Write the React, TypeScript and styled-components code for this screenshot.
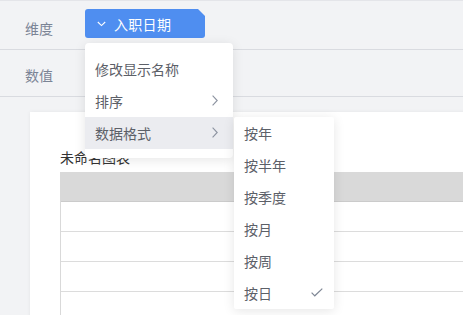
import React from 'react';
import styled, { createGlobalStyle } from 'styled-components';

const GlobalStyle = createGlobalStyle`
  html, body {
    margin: 0;
    padding: 0;
  }
  body {
    font-family: "Noto Sans CJK SC", "Noto Sans", sans-serif;
    background: #f2f3f5;
  }
`;

const Page = styled.div`
  position: relative;
  width: 463px;
  height: 315px;
  overflow: hidden;
  background: #f2f3f5;
  border-top: 1px solid #e4e5e9;
  box-sizing: border-box;
`;

const FieldRow = styled.div<{ $height: number; $pad: number }>`
  display: flex;
  align-items: flex-start;
  height: ${(p) => p.$height}px;
  padding-top: ${(p) => p.$pad}px;
  box-sizing: border-box;
  border-bottom: 1px solid #d9dbe0;
  padding-left: 25px;
`;

const FieldLabel = styled.div<{ $top: number }>`
  width: 60px;
  margin-top: ${(p) => p.$top}px;
  font-size: 14px;
  line-height: 20px;
  color: #7b8495;
`;

const Tag = styled.div`
  display: flex;
  align-items: center;
  gap: 8px;
  width: 120px;
  height: 29px;
  padding-left: 12px;
  box-sizing: border-box;
  background: #4f8ef0;
  border-radius: 3px;
  clip-path: polygon(0 0, calc(100% - 7px) 0, 100% 7px, 100% 100%, 0 100%);
  color: #fff;
  font-size: 14px;
  letter-spacing: 0.3px;
`;

const Content = styled.div`
  padding: 15px 0 0 30px;
`;

const Card = styled.div`
  width: 480px;
  height: 240px;
  background: #fff;
  box-shadow: 0 0 4px rgba(0, 0, 0, 0.06);
  padding: 35px 0 0 30px;
  box-sizing: border-box;
`;

const ChartTitle = styled.div`
  font-size: 14px;
  line-height: 20px;
  color: #333;
  margin-bottom: 5px;
`;

const Table = styled.div`
  width: 420px;
  border-left: 1px solid #d9d9d9;
`;

const HeaderRow = styled.div`
  height: 30px;
  background: #d9d9d9;
  border-bottom: 1px solid #cbcbcb;
  box-sizing: border-box;
`;

const BodyRow = styled.div`
  height: 30px;
  border-bottom: 1px solid #dcdcdc;
  box-sizing: border-box;
`;

const Menu = styled.div<{ $width: number }>`
  position: absolute;
  width: ${(p) => p.$width}px;
  background: #fff;
  border-radius: 4px;
  box-shadow: 0 2px 12px rgba(0, 0, 0, 0.1);
`;

const MainMenu = styled(Menu)`
  left: 85px;
  top: 42px;
  padding: 10px 0 9px;
`;

const SubMenu = styled(Menu)`
  left: calc(100% + 1px);
  top: 0;
  padding: 0;
  border-radius: 2px;
`;

const MenuItem = styled.div<{ $active?: boolean; $right?: number }>`
  position: relative;
  display: flex;
  align-items: center;
  justify-content: space-between;
  height: 32px;
  padding: 0 ${(p) => p.$right ?? 10}px 1px 10px;
  box-sizing: border-box;
  background: ${(p) => (p.$active ? '#ebecf0' : 'transparent')};
  font-size: 14px;
  color: #5c6068;
`;

const ChevronDown = () => (
  <svg width="9" height="6" viewBox="0 0 9 6">
    <polyline points="0.8,1 4.5,4.6 8.2,1" fill="none" stroke="#fff" strokeWidth="1.1" />
  </svg>
);

const ChevronRight = () => (
  <svg width="6" height="11" viewBox="0 0 6 11">
    <polyline points="0.6,0.6 5.2,5.5 0.6,10.4" fill="none" stroke="#8c93a0" strokeWidth="1.1" />
  </svg>
);

const Check = () => (
  <svg width="12" height="9" viewBox="0 0 12 9">
    <polyline points="0.6,4.6 3.8,7.8 11.3,0.6" fill="none" stroke="#7f8795" strokeWidth="1.2" />
  </svg>
);

const formats = ['按年', '按半年', '按季度', '按月', '按周', '按日'];

const App: React.FC = () => {
  return (
    <Page>
      <GlobalStyle />
      <FieldRow $height={49} $pad={8}>
        <FieldLabel $top={9}>维度</FieldLabel>
        <Tag>
          <ChevronDown />
          入职日期
        </Tag>
      </FieldRow>
      <FieldRow $height={47} $pad={15}>
        <FieldLabel $top={0}>数值</FieldLabel>
      </FieldRow>
      <Content>
        <Card>
          <ChartTitle>未命名图表</ChartTitle>
          <Table>
            <HeaderRow />
            <BodyRow />
            <BodyRow />
            <BodyRow />
            <BodyRow />
          </Table>
        </Card>
      </Content>

      <MainMenu $width={148}>
        <MenuItem>修改显示名称</MenuItem>
        <MenuItem $right={15}>
          排序
          <ChevronRight />
        </MenuItem>
        <MenuItem $active $right={15}>
          数据格式
          <ChevronRight />
          <SubMenu $width={100}>
            {formats.map((f) => (
              <MenuItem key={f} $right={11}>
                {f}
                {f === '按日' && <Check />}
              </MenuItem>
            ))}
          </SubMenu>
        </MenuItem>
      </MainMenu>
    </Page>
  );
};

export default App;
